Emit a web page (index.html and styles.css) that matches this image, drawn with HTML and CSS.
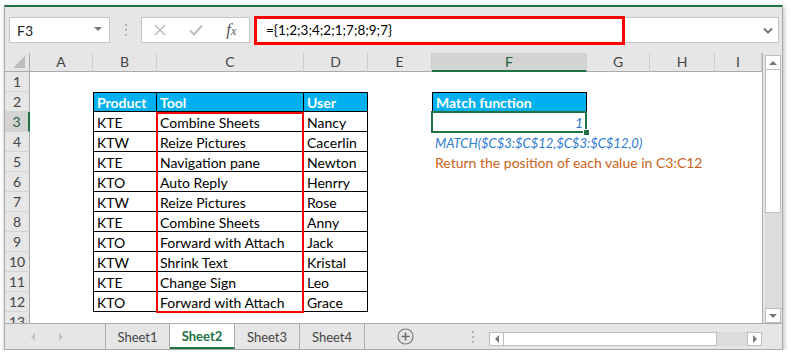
FILE: index.html
```html
<!DOCTYPE html>
<html lang="en">
<head>
    <meta charset="UTF-8">
    <title>MATCH - Sheet2</title>
    <link rel="stylesheet" href="styles.css">
</head>
<body>
    <div class="window">
        <div class="formula-bar">
            <div class="name-box">
                <span>F3</span>
                <span class="caret"></span>
            </div>
            <div class="grip"><span></span><span></span><span></span></div>
            <div class="fx-buttons">
                <span class="fx-btn">
                    <svg width="12" height="12" viewBox="0 0 12 12"><path d="M1 1L11 11M11 1L1 11" stroke="#bdbdbd" stroke-width="1.6" fill="none"/></svg>
                </span>
                <span class="fx-btn">
                    <svg width="14" height="12" viewBox="0 0 14 12"><path d="M1 6.5L5 10.5L13 1.5" stroke="#bdbdbd" stroke-width="2" fill="none"/></svg>
                </span>
                <span class="fx-btn fx">f<small>x</small></span>
            </div>
            <div class="formula-input">
                <span>={1;2;3;4;2;1;7;8;9;7}</span>
                <div class="formula-mark"></div>
                <svg class="chevron" width="10" height="7" viewBox="0 0 10 7"><path d="M1 1.5L5 5.5L9 1.5" stroke="#777" stroke-width="2" fill="none"/></svg>
            </div>
        </div>

        <div class="sheet-area">
            <div class="grid" id="grid"></div>
            <div class="vscroll">
                <div class="sb-btn"><span class="tri up"></span></div>
                <div class="v-thumb"></div>
                <div class="v-track"></div>
                <div class="sb-btn"><span class="tri down"></span></div>
            </div>
        </div>

        <div class="tab-bar">
            <div class="tab-nav">
                <span class="tri left light"></span>
                <span class="tri right light"></span>
            </div>
            <div class="tab">Sheet1</div>
            <div class="tab active">Sheet2</div>
            <div class="tab">Sheet3</div>
            <div class="tab">Sheet4</div>
            <div class="sheet-add">
                <svg width="17" height="17" viewBox="0 0 17 17"><circle cx="8.5" cy="8.5" r="7.5" stroke="#7a7a7a" stroke-width="1.2" fill="none"/><path d="M8.5 4.5V12.5M4.5 8.5H12.5" stroke="#6a6a6a" stroke-width="1.6"/></svg>
                <div class="grip small"><span></span><span></span><span></span></div>
            </div>
            <div class="hscroll">
                <div class="sb-btn"><span class="tri left"></span></div>
                <div class="h-thumb"></div>
                <div class="h-track"></div>
                <div class="sb-btn"><span class="tri right"></span></div>
            </div>
        </div>
    </div>

    <script>
        const letters = ['A', 'B', 'C', 'D', 'E', 'F', 'G', 'H', 'I'];
        const tools = [
            ['KTE', 'Combine Sheets', 'Nancy'],
            ['KTW', 'Reize Pictures', 'Cacerlin'],
            ['KTE', 'Navigation pane', 'Newton'],
            ['KTO', 'Auto Reply', 'Henrry'],
            ['KTW', 'Reize Pictures', 'Rose'],
            ['KTE', 'Combine Sheets', 'Anny'],
            ['KTO', 'Forward with Attach', 'Jack'],
            ['KTW', 'Shrink Text', 'Kristal'],
            ['KTE', 'Change Sign', 'Leo'],
            ['KTO', 'Forward with Attach', 'Grace']
        ];
        const extras = {
            F2: { text: 'Match function', cls: 'head boxed' },
            F3: { text: '1', cls: 'result' },
            F4: { text: 'MATCH($C$3:$C$12,$C$3:$C$12,0)', cls: 'formula' },
            F5: { text: 'Return the position of each value in C3:C12', cls: 'note' }
        };

        function cellFor(row, col) {
            const ref = letters[col] + row;
            if (extras[ref]) return extras[ref];
            // table lives in B2:D12
            if (col >= 1 && col <= 3 && row >= 2 && row <= 12) {
                let cls = 'tbl';
                if (col == 1) cls += ' first-col';
                if (row == 2) cls += ' head first-row';
                const text = row == 2 ? ['Product', 'Tool', 'User'][col - 1] : tools[row - 3][col - 1];
                return { text: text, cls: cls };
            }
            return { text: '', cls: '' };
        }

        let html = '<div class="corner"><span></span></div>';
        html += letters.map(l => `<div class="col-head${l == 'F' ? ' sel' : ''}">${l}</div>`).join('');

        for (let row = 1; row <= 13; row++) {
            html += `<div class="row-head${row == 3 ? ' sel' : ''}">${row}</div>`;
            for (let col = 0; col < letters.length; col++) {
                const c = cellFor(row, col);
                html += `<div class="cell ${c.cls}">${c.text}</div>`;
            }
        }

        html += '<div class="red-box"></div>';
        html += '<div class="selection"><span class="handle"></span></div>';
        document.getElementById('grid').innerHTML = html;
    </script>
</body>
</html>
```

FILE: styles.css
```css
* {
    box-sizing: border-box;
}
body {
    margin: 0;
    background: #fff;
    font-family: Lato, 'Liberation Sans', sans-serif;
    color: #000;
}
.window {
    margin: 5px 0 0 4px;
    width: 779px;
    height: 345px;
    border: 1px solid #a9a9a9;
    border-top: 2px solid #217346;
    background: #e6e6e6;
    box-shadow: 1px 2px 5px rgba(0, 0, 0, 0.28);
    display: flex;
    flex-direction: column;
}

/* formula bar */
.formula-bar {
    height: 46px;
    display: flex;
    align-items: center;
}
.name-box {
    margin-left: 4px;
    width: 101px;
    height: 26px;
    background: #fff;
    border: 1px solid #c6c6c6;
    display: flex;
    align-items: center;
    justify-content: space-between;
    padding: 0 7px 0 7px;
    font-size: 14px;
    color: #222;
}
.caret {
    border-top: 4px solid #7a7a7a;
    border-left: 4px solid transparent;
    border-right: 4px solid transparent;
    margin-top: -2px;
}
.grip {
    width: 31px;
    display: flex;
    flex-direction: column;
    align-items: center;
    gap: 3px;
}
.grip span {
    width: 2px;
    height: 2px;
    background: #b3b3b3;
}
.fx-buttons {
    width: 109px;
    height: 26px;
    background: #fff;
    border: 1px solid #c6c6c6;
    display: flex;
    align-items: center;
}
.fx-btn {
    width: 36px;
    display: flex;
    justify-content: center;
}
.fx {
    font-family: 'Liberation Serif', serif;
    font-style: italic;
    font-size: 17px;
    color: #555;
}
.fx small {
    font-size: 12px;
    margin-top: 4px;
}
.formula-input {
    position: relative;
    flex: 1;
    margin: 0 3px 0 5px;
    height: 26px;
    background: #fff;
    border: 1px solid #c6c6c6;
    display: flex;
    align-items: center;
    padding-left: 10px;
    font-size: 13.5px;
}
.formula-mark {
    position: absolute;
    left: -2px;
    top: -2px;
    width: 371px;
    height: 29px;
    border: 3px solid #f00;
}
.chevron {
    margin-left: auto;
    margin-right: 5px;
}

/* grid */
.sheet-area {
    height: 270px;
    display: flex;
}
.grid {
    position: relative;
    width: 758px;
    height: 270px;
    display: grid;
    grid-template-columns: 25px 63px 64px 147px 64px 64px 155px 63px 65px 47px;
    grid-template-rows: 19px repeat(13, 20px);
    background: #fff;
    border-right: 1px solid #ababab;
    overflow: hidden;
    font-size: 14px;
}
.corner {
    background: #e6e6e6;
    border-right: 1px solid #ababab;
    border-bottom: 1px solid #ababab;
    position: relative;
}
.corner span {
    position: absolute;
    right: 4px;
    bottom: 3px;
    border-bottom: 12px solid #bcbcbc;
    border-left: 12px solid transparent;
}
.col-head {
    background: #e6e6e6;
    border-right: 1px solid #cdcdcd;
    border-bottom: 1px solid #ababab;
    text-align: center;
    font-size: 14px;
    line-height: 18px;
    color: #444;
}
.col-head:last-of-type {
    border-right: none;
}
.col-head.sel {
    background: #d3d3d3;
    color: #1e5e3c;
    border-bottom: 2px solid #217346;
}
.row-head {
    background: #e6e6e6;
    border-right: 1px solid #ababab;
    border-bottom: 1px solid #d4d4d4;
    text-align: center;
    font-size: 14px;
    line-height: 20px;
    color: #444;
}
.row-head.sel {
    background: #d3d3d3;
    color: #1e5e3c;
    border-right: 2px solid #217346;
}
.cell {
    padding: 1px 3px 0;
    line-height: 20px;
    white-space: nowrap;
}
.tbl {
    border-right: 1px solid #000;
    border-bottom: 1px solid #000;
}
.first-col {
    border-left: 1px solid #000;
}
.first-row {
    border-top: 1px solid #000;
}
.head {
    background: #00b0f0;
    color: #fff;
    font-weight: bold;
    line-height: 18px;
}
.boxed {
    border: 1px solid #000;
}
.result {
    text-align: right;
    font-style: italic;
    color: #2e7bcf;
    padding-right: 4px;
}
.formula {
    font-style: italic;
    font-size: 13px;
    color: #2e7bcf;
}
.note {
    color: #c9621a;
}
.red-box {
    position: absolute;
    grid-column: 4 / 5;
    grid-row: 4 / 14;
    inset: 0 0 -1px -1px;
    border: 2px solid #f00;
}
.selection {
    position: absolute;
    grid-column: 7 / 8;
    grid-row: 4 / 5;
    inset: -1px 0 -1px -1px;
    border: 2px solid #217346;
}
.handle {
    position: absolute;
    right: -5px;
    bottom: -5px;
    width: 7px;
    height: 7px;
    background: #217346;
    border: 1px solid #fff;
}

/* scrollbars */
.vscroll {
    width: 19px;
    padding: 2px 1px 0 2px;
    display: flex;
    flex-direction: column;
}
.sb-btn {
    width: 16px;
    height: 15px;
    background: #fff;
    border: 1px solid #bdbdbd;
    display: flex;
    align-items: center;
    justify-content: center;
}
.v-thumb {
    height: 143px;
    background: #fff;
    border: 1px solid #bdbdbd;
    border-top: none;
}
.v-track {
    flex: 1;
    background: #dcdcdc;
}
.tri {
    width: 0;
    height: 0;
}
.tri.up {
    border-bottom: 4px solid #777;
    border-left: 4px solid transparent;
    border-right: 4px solid transparent;
}
.tri.down {
    border-top: 4px solid #777;
    border-left: 4px solid transparent;
    border-right: 4px solid transparent;
}
.tri.left {
    border-right: 4px solid #777;
    border-top: 4px solid transparent;
    border-bottom: 4px solid transparent;
}
.tri.right {
    border-left: 4px solid #777;
    border-top: 4px solid transparent;
    border-bottom: 4px solid transparent;
}
.tri.light {
    border-left-color: #c4c4c4;
    border-right-color: #c4c4c4;
}

/* sheet tabs */
.tab-bar {
    height: 26px;
    border-top: 1px solid #ababab;
    display: flex;
}
.tab-nav {
    width: 100px;
    display: flex;
    align-items: center;
    gap: 24px;
    padding-left: 26px;
}
.tab {
    width: 65px;
    border-right: 1px solid #ababab;
    display: flex;
    align-items: center;
    justify-content: center;
    font-size: 13px;
    color: #444;
}
.tab-nav + .tab {
    border-left: 1px solid #ababab;
}
.tab.active {
    background: #fff;
    color: #217346;
    font-weight: bold;
    border-bottom: 2px solid #217346;
}
.sheet-add {
    width: 124px;
    display: flex;
    align-items: center;
    padding-left: 32px;
}
.grip.small {
    width: auto;
    margin-left: 58px;
}
.hscroll {
    width: 273px;
    height: 14px;
    margin-top: 8px;
    display: flex;
}
.hscroll .sb-btn {
    width: 15px;
    height: 14px;
}
.h-thumb {
    width: 213px;
    background: #fff;
    border: 1px solid #bdbdbd;
    border-left: none;
}
.h-track {
    flex: 1;
    background: #dcdcdc;
}
```
